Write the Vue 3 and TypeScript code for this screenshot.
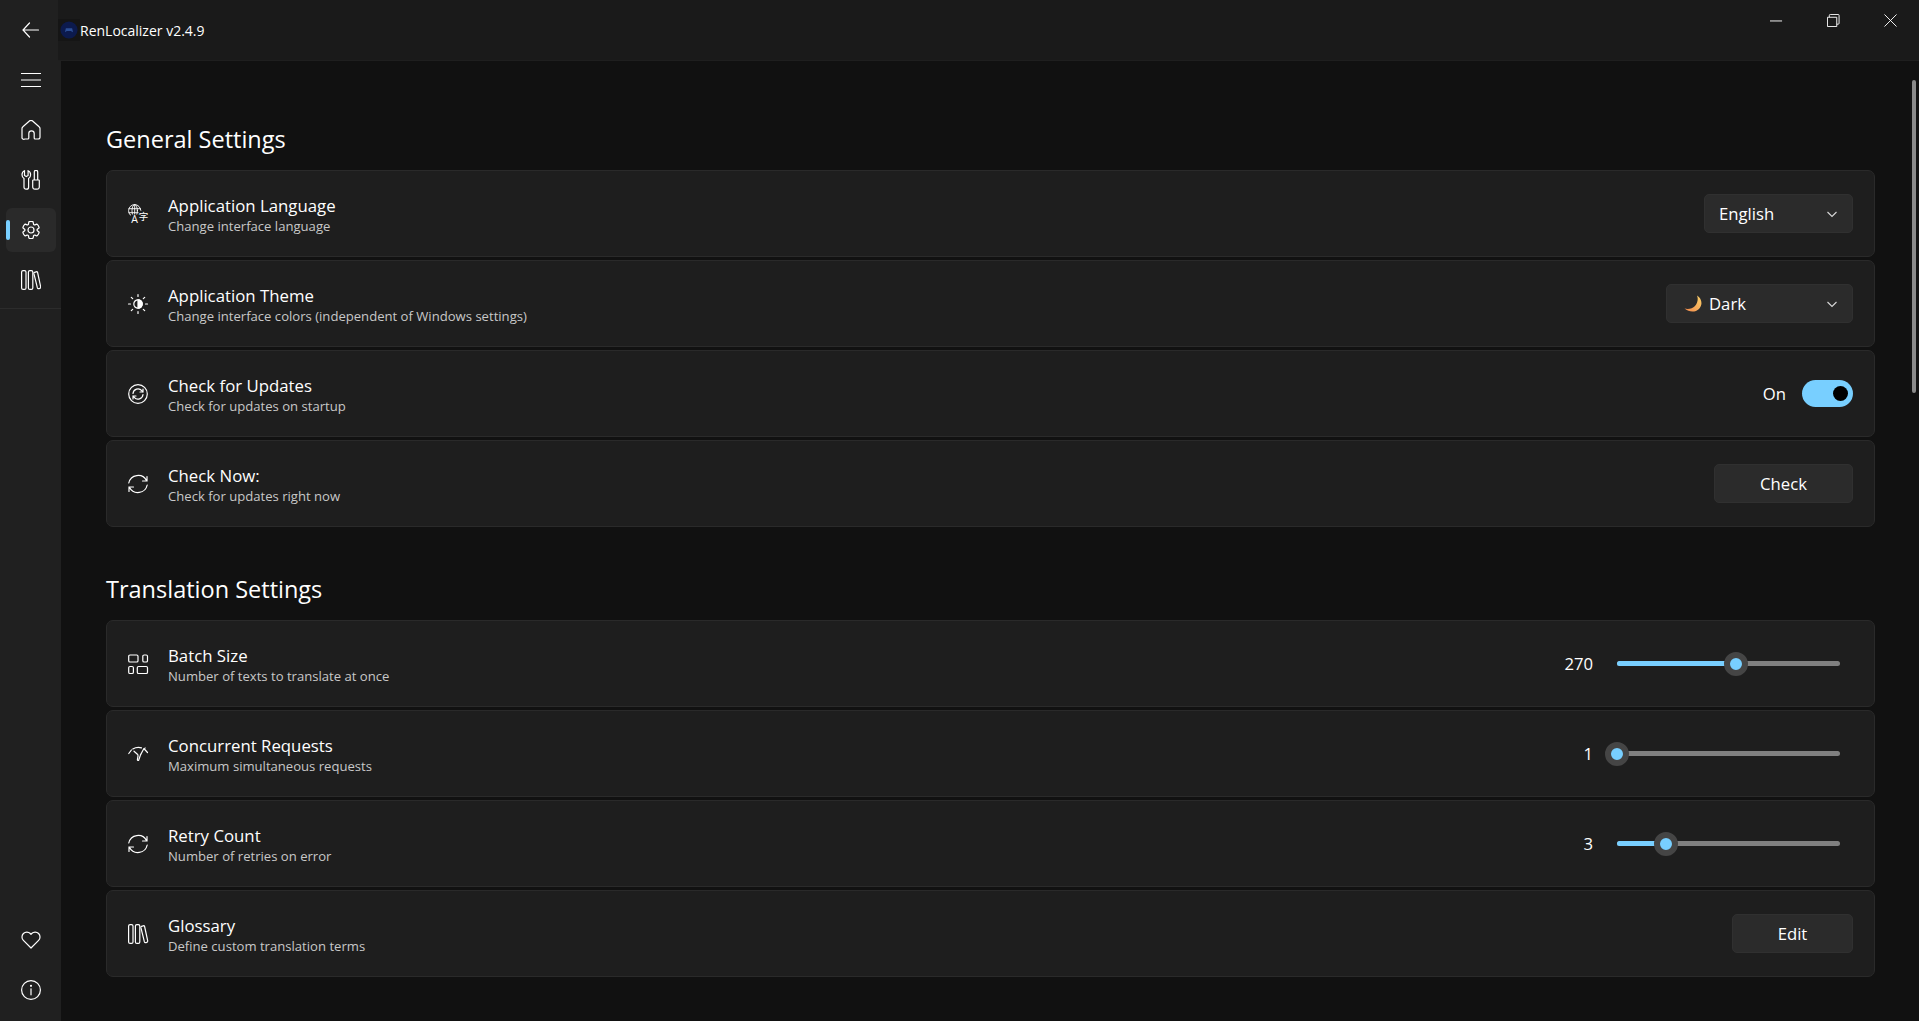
<template>
  <div class="app">
    <aside class="sidebar">
      <div class="nav-top">
        <button v-for="item in topNav" :key="item.icon" :class="['nav-btn', { active: item.active }]">
          <span v-if="item.active" class="nav-mark"></span>
          <svg class="nav-icon" viewBox="0 0 20 20" v-html="icons[item.icon]"></svg>
        </button>
      </div>
      <div class="nav-divider"></div>
      <div class="nav-bottom">
        <button v-for="name in bottomNav" :key="name" class="nav-btn">
          <svg class="nav-icon" viewBox="0 0 20 20" v-html="icons[name]"></svg>
        </button>
      </div>
    </aside>

    <div class="main">
      <header class="titlebar">
        <span class="logo-box">
          <svg class="logo" viewBox="0 0 20 20">
            <circle cx="10" cy="10" r="9.500" fill="#0c1a4d" />
            <path d="M5.500 12.500l1-4.500h7l1 4.500-2.500-1.500h-4.500z" fill="#2c4f96" />
          </svg>
        </span>
        <span class="app-title">RenLocalizer v2.4.9</span>
        <div class="win-controls">
          <svg class="win-icon" viewBox="0 0 14 14"><path d="M0 7.500h13" /></svg>
          <svg class="win-icon" viewBox="0 0 14 14"><path d="M.5 3.500h10v10H.5z M2.500 3.500v-2a1 1 0 0 1 1-1h8.500a1 1 0 0 1 1 1v8.500a1 1 0 0 1-1 1h-1.500" /></svg>
          <svg class="win-icon" viewBox="0 0 14 14"><path d="M.5.5l13 13M13.500.5l-13 13" /></svg>
        </div>
      </header>

      <main class="content">
        <section v-for="section in sections" :key="section.title" class="section">
          <h2 class="section-title">{{ section.title }}</h2>
          <div class="cards">
            <div v-for="row in section.rows" :key="row.title" class="card">
              <svg class="card-icon" viewBox="0 0 20 20" v-html="icons[row.icon]"></svg>
              <div class="card-text">
                <div class="card-title">{{ row.title }}</div>
                <div class="card-sub">{{ row.sub }}</div>
              </div>

              <div v-if="row.kind === 'select'" class="select" :style="{ width: row.width + 'px' }">
                <svg v-if="row.moon" class="moon" viewBox="0 0 18 18">
                  <defs>
                    <linearGradient id="moonFill" x1="0" y1="1" x2="1" y2="0">
                      <stop offset="0" stop-color="#f2884a" />
                      <stop offset="1" stop-color="#fbd26a" />
                    </linearGradient>
                  </defs>
                  <path d="M13 .5C18 3.500 19 10 15 14 11.500 17.500 5 17.500.5 13.500c4 1 8 0 10.500-2.500C13.500 8 14.500 4 13 .5z" fill="url(#moonFill)" />
                </svg>
                <span class="select-label">{{ row.value }}</span>
                <svg class="chevron" viewBox="0 0 12 12"><path d="M1.500 4l4.500 4.500L10.500 4" /></svg>
              </div>

              <div v-else-if="row.kind === 'toggle'" class="toggle-wrap">
                <span class="toggle-label">{{ row.value }}</span>
                <span class="toggle"><span class="toggle-thumb"></span></span>
              </div>

              <button v-else-if="row.kind === 'button'" class="btn" :style="{ width: row.width + 'px' }">{{ row.value }}</button>

              <div v-else-if="row.kind === 'slider'" class="slider-wrap">
                <span class="slider-value">{{ row.value }}</span>
                <div class="slider">
                  <div class="slider-fill" :style="{ width: row.percent + '%' }"></div>
                  <span class="slider-thumb" :style="{ left: row.percent + '%' }"></span>
                </div>
              </div>
            </div>
          </div>
        </section>
      </main>
      <div class="scrollbar"></div>
    </div>
  </div>
</template>

<script setup lang="ts">
interface Row {
  icon: string
  title: string
  sub: string
  kind: 'select' | 'toggle' | 'button' | 'slider'
  value: string
  width?: number
  moon?: boolean
  percent?: number
}

const icons: Record<string, string> = {
  back: '<path d="M17.500 10H2M8.500 3L2 10l6.500 7" />',
  menu: '<path d="M.5 3.500h19M.5 10h19M.5 16.500h19" />',
  home: '<path d="M8.400 1a2.400 2.400 0 0 1 3.200 0l6.500 5.700c.6.500.9 1.200.9 1.900v8.600a1.800 1.800 0 0 1-1.800 1.800h-3a1 1 0 0 1-1-1v-4.500a2.700 2.700 0 0 0-5.400 0V18a1 1 0 0 1-1 1h-3A1.800 1.800 0 0 1 1 17.200V8.600c0-.7.300-1.400.9-1.900z" />',
  tools: '<path d="M3.500 .8v4.700l1.800 1 1.800-1V.8c1.500.7 2.500 2.200 2.500 4 0 1.600-.8 3-2 3.700v8.700A2 2 0 0 1 5.600 19.200H5a2 2 0 0 1-2-2V8.500C1.800 7.800 1 6.400 1 4.800c0-1.800 1-3.300 2.500-4z" /><path d="M13.300 10V2a1.700 1.700 0 0 1 3.400 0v8M12.300 10h5.400c.4 0 .6.200.6.600v6.400a2.200 2.200 0 0 1-2.200 2.200h-2.200a2.200 2.200 0 0 1-2.200-2.200v-6.400c0-.4.200-.6.600-.6z" />',
  gear: '<circle cx="10" cy="10" r="3" /><path d="M1.911 7.383a8.491 8.491 0 0 1 1.780-3.080.5.5 0 0 1 .54-.135l1.918.686a1 1 0 0 0 1.320-.762l.366-2.006a.5.5 0 0 1 .388-.4 8.532 8.532 0 0 1 3.554 0 .5.5 0 0 1 .388.4l.366 2.006a1 1 0 0 0 1.320.762l1.919-.686a.5.5 0 0 1 .54.136 8.491 8.491 0 0 1 1.780 3.079.5.5 0 0 1-.153.535l-1.555 1.320a1 1 0 0 0 0 1.524l1.555 1.320a.5.5 0 0 1 .152.535 8.491 8.491 0 0 1-1.780 3.080.5.5 0 0 1-.54.135l-1.918-.686a1 1 0 0 0-1.320.762l-.366 2.007a.5.5 0 0 1-.388.399 8.528 8.528 0 0 1-3.554 0 .5.5 0 0 1-.388-.4l-.366-2.006a1 1 0 0 0-1.320-.762l-1.918.686a.5.5 0 0 1-.54-.136 8.490 8.490 0 0 1-1.780-3.079.5.5 0 0 1 .152-.535l1.555-1.320a1 1 0 0 0 0-1.524l-1.555-1.320a.5.5 0 0 1-.152-.535z" stroke-linejoin="round" />',
  library: '<rect x=".6" y=".6" width="4.400" height="18.800" rx="1.500" /><rect x="7.400" y=".6" width="4.400" height="18.800" rx="1.500" /><path d="M13.500 2.300l1.700-.5c.7-.2 1.200.1 1.400.7l3.100 14.400c.1.700-.1 1.200-.8 1.400l-1.100.3c-.7.200-1.200-.1-1.400-.7L12.900 3.700c-.1-.7 0-1.200.6-1.400z" />',
  heart: '<path d="M10 18L2.400 10.400a4.900 4.900 0 0 1 0-6.900 4.800 4.800 0 0 1 6.900 0l.7.800.7-.8a4.800 4.800 0 0 1 6.900 0 4.900 4.900 0 0 1 0 6.900z" stroke-linejoin="round" />',
  info: '<circle cx="10" cy="10" r="9.400" /><path d="M10 8.800v6" /><circle cx="10" cy="5.800" r=".5" />',
  language: '<circle cx="6.700" cy="6.700" r="6.100" stroke-width=".9" /><ellipse cx="6.700" cy="6.700" rx="2.700" ry="6.100" stroke-width=".9" /><path d="M1 4.700h11.400M1 8.700h11.400M6.700 .6v12" stroke-width=".9" /><rect x="3" y="10.500" width="8" height="9.500" fill="#1e1e1e" stroke="none" /><rect x="10.500" y="6.500" width="9.500" height="11.500" fill="#1e1e1e" stroke="none" /><text x="3.300" y="19" class="glyph">A</text><text x="10.700" y="16" class="glyph-cjk">字</text>',
  theme: '<circle cx="10" cy="10" r="4.200" /><path d="M10 5.800a4.200 4.200 0 0 1 0 8.400z" fill="currentColor" /><path d="M10 .5v2M10 17.500v2M.5 10h2M17.500 10h2M3.300 3.300l1.400 1.400M15.300 15.300l1.400 1.400M3.300 16.700l1.400-1.400M15.300 4.700l1.400-1.400" />',
  updates: '<circle cx="10" cy="10" r="9.300" /><path d="M5 9.500a5 5 0 0 1 8.800-2.800l1.200 1.300M15 5v3h-3M15 10.500a5 5 0 0 1-8.800 2.800L5 12M5 15v-3h3" />',
  sync: '<path d="M.8 9A9.500 9.500 0 0 1 18.500 6.500M19 2.500V7h-4.500M19.200 11A9.500 9.500 0 0 1 1.500 13.500M1 17.500V13h4.500" />',
  batch: '<rect x=".7" y="1" width="9.300" height="7" rx="1.300" /><rect x="14.800" y="1" width="4.700" height="7" rx="1.300" /><rect x=".7" y="12.500" width="4.700" height="7" rx="1.300" /><rect x="9.300" y="12.500" width="10.200" height="7" rx="1.300" />',
  gauge: '<path d="M.8 9.500L3.400 6M4.800 5C7.500 3.400 10.500 3.100 13.500 3.800M16.300 5l3.200 3.500M16.300 5l.8-1" /><path d="M6 7.200l3.400 3c.5.500.7 1.100.6 1.900l-.6 3.400c-.1.900 1 1.300 1.400.4l1.400-4.200c.3-1 .8-1.700 1.300-2.700l2.300-4.300" />',
}

const topNav = [
  { icon: 'back' },
  { icon: 'menu' },
  { icon: 'home' },
  { icon: 'tools' },
  { icon: 'gear', active: true },
  { icon: 'library' },
]
const bottomNav = ['heart', 'info']

const sections: { title: string; rows: Row[] }[] = [
  {
    title: 'General Settings',
    rows: [
      { icon: 'language', title: 'Application Language', sub: 'Change interface language', kind: 'select', value: 'English', width: 149 },
      { icon: 'theme', title: 'Application Theme', sub: 'Change interface colors (independent of Windows settings)', kind: 'select', value: 'Dark', width: 187, moon: true },
      { icon: 'updates', title: 'Check for Updates', sub: 'Check for updates on startup', kind: 'toggle', value: 'On' },
      { icon: 'sync', title: 'Check Now:', sub: 'Check for updates right now', kind: 'button', value: 'Check', width: 139 },
    ],
  },
  {
    title: 'Translation Settings',
    rows: [
      { icon: 'batch', title: 'Batch Size', sub: 'Number of texts to translate at once', kind: 'slider', value: '270', percent: 53.4 },
      { icon: 'gauge', title: 'Concurrent Requests', sub: 'Maximum simultaneous requests', kind: 'slider', value: '1', percent: 0 },
      { icon: 'sync', title: 'Retry Count', sub: 'Number of retries on error', kind: 'slider', value: '3', percent: 22 },
      { icon: 'library', title: 'Glossary', sub: 'Define custom translation terms', kind: 'button', value: 'Edit', width: 121 },
    ],
  },
]
</script>

<style>
html,
body {
  margin: 0;
  background: #111111;
}
</style>

<style scoped>
.app {
  display: flex;
  width: 1919px;
  height: 1021px;
  overflow: hidden;
  background: #111111;
  color: #ffffff;
  font-family: "Open Sans", "Noto Sans", sans-serif;
}

.sidebar {
  display: flex;
  flex-direction: column;
  flex: 0 0 61px;
  width: 61px;
  background: #202020;
}

.nav-top {
  display: flex;
  flex-direction: column;
  padding-top: 5px;
}

.nav-btn {
  position: relative;
  display: flex;
  align-items: center;
  justify-content: center;
  width: 50px;
  height: 44px;
  margin: 3px 0 3px 6px;
  padding: 0 1px 0 0;
  border: 0;
  border-radius: 6px;
  background: transparent;
  color: #ffffff;
}

.nav-btn.active {
  background: #2a2a2a;
}

.nav-mark {
  position: absolute;
  left: 0;
  top: 12px;
  width: 4px;
  height: 20px;
  border-radius: 2px;
  background: #78cfff;
}

.nav-icon {
  width: 20px;
  height: 20px;
  fill: none;
  stroke: currentColor;
  stroke-width: 1.200;
  stroke-linecap: round;
}

.nav-divider {
  height: 1px;
  margin-top: 3px;
  background: #2c2c2c;
}

.nav-bottom {
  display: flex;
  flex-direction: column;
  margin-top: auto;
  padding-bottom: 6px;
}

.main {
  position: relative;
  display: flex;
  flex-direction: column;
  flex: 1;
  min-width: 0;
}

.titlebar {
  display: flex;
  align-items: center;
  flex: 0 0 61px;
  margin-left: -3px;
  border-bottom: 1px solid #1f1f1f;
  background: #1a1a1a;
  box-sizing: border-box;
}

.logo-box {
  display: flex;
  align-items: center;
  justify-content: center;
  width: 22px;
  height: 22px;
  background: #151515;
}

.logo {
  width: 18px;
  height: 18px;
}

.app-title {
  font-size: 14px;
  color: #ffffff;
}

.win-controls {
  display: flex;
  align-items: center;
  gap: 44px;
  margin-left: auto;
  padding-right: 22px;
}

.win-icon {
  width: 13px;
  height: 13px;
  fill: none;
  stroke: #ffffff;
  stroke-width: 1;
  margin-top: -20px;
}

.content {
  flex: 1;
  padding: 59px 44px 0 45px;
  overflow: hidden;
}

.section + .section {
  margin-top: 43px;
}

.section-title {
  margin: 0;
  height: 50px;
  font-size: 23.500px;
  font-weight: 400;
  line-height: 38px;
}

.cards {
  display: flex;
  flex-direction: column;
  gap: 3px;
}

.card {
  display: flex;
  align-items: center;
  height: 87px;
  box-sizing: border-box;
  padding: 0 21px 0 21px;
  border: 1px solid #2a2a2a;
  border-radius: 7px;
  background: #1e1e1e;
}

.card-icon {
  flex: 0 0 20px;
  width: 20px;
  height: 20px;
  overflow: visible;
  fill: none;
  stroke: #ffffff;
  stroke-width: 1.200;
  stroke-linecap: round;
  color: #ffffff;
}

.card-icon :deep(.glyph) {
  fill: #ffffff;
  stroke: none;
  font-size: 10.500px;
  font-family: "Open Sans", sans-serif;
}

.card-icon :deep(.glyph-cjk) {
  fill: #ffffff;
  stroke: none;
  font-size: 9.500px;
  font-family: "Noto Sans CJK SC", sans-serif;
}

.card-text {
  flex: 1;
  margin-left: 20px;
}

.card-title {
  margin-top: 1px;
  font-size: 16.800px;
  line-height: 24px;
  color: #ffffff;
}

.card-sub {
  font-size: 13.100px;
  line-height: 17px;
  color: #c8c8c8;
}

.select {
  display: flex;
  align-items: center;
  height: 39px;
  box-sizing: border-box;
  padding: 0 14px;
  border: 1px solid #303030;
  border-radius: 5px;
  background: #2b2b2b;
  font-size: 16.700px;
}

.moon {
  width: 18px;
  height: 18px;
  margin-left: 3px;
  margin-right: 7px;
}

.select-label {
  flex: 1;
}

.chevron {
  width: 12px;
  height: 12px;
  fill: none;
  stroke: #d8d8d8;
  stroke-width: 1.100;
}

.toggle-wrap {
  display: flex;
  align-items: center;
  gap: 16px;
  font-size: 16.700px;
}

.toggle {
  position: relative;
  display: block;
  width: 51px;
  height: 27px;
  border-radius: 14px;
  background: #78cfff;
}

.toggle-thumb {
  position: absolute;
  right: 5px;
  top: 6px;
  width: 15px;
  height: 15px;
  border-radius: 50%;
  background: #000000;
}

.btn {
  height: 39px;
  box-sizing: border-box;
  border: 1px solid #303030;
  border-radius: 5px;
  background: #2b2b2b;
  color: #ffffff;
  font-family: inherit;
  font-size: 16.700px;
}

.slider-wrap {
  display: flex;
  align-items: center;
  padding-right: 13px;
}

.slider-value {
  width: 60px;
  margin-right: 24px;
  text-align: right;
  font-size: 16.700px;
}

.slider {
  position: relative;
  width: 223px;
  height: 5px;
  border-radius: 3px;
  background: #808080;
}

.slider-fill {
  height: 100%;
  border-radius: 3px;
  background: #78cfff;
}

.slider-thumb {
  position: absolute;
  top: 50%;
  width: 12px;
  height: 12px;
  box-sizing: content-box;
  border: 6px solid #454545;
  border-radius: 50%;
  background: #78cfff;
  transform: translate(-50%, -50%);
}

.scrollbar {
  position: absolute;
  right: 3px;
  top: 80px;
  width: 4px;
  height: 313px;
  border-radius: 2px;
  background: #8a8a8a;
}
</style>
